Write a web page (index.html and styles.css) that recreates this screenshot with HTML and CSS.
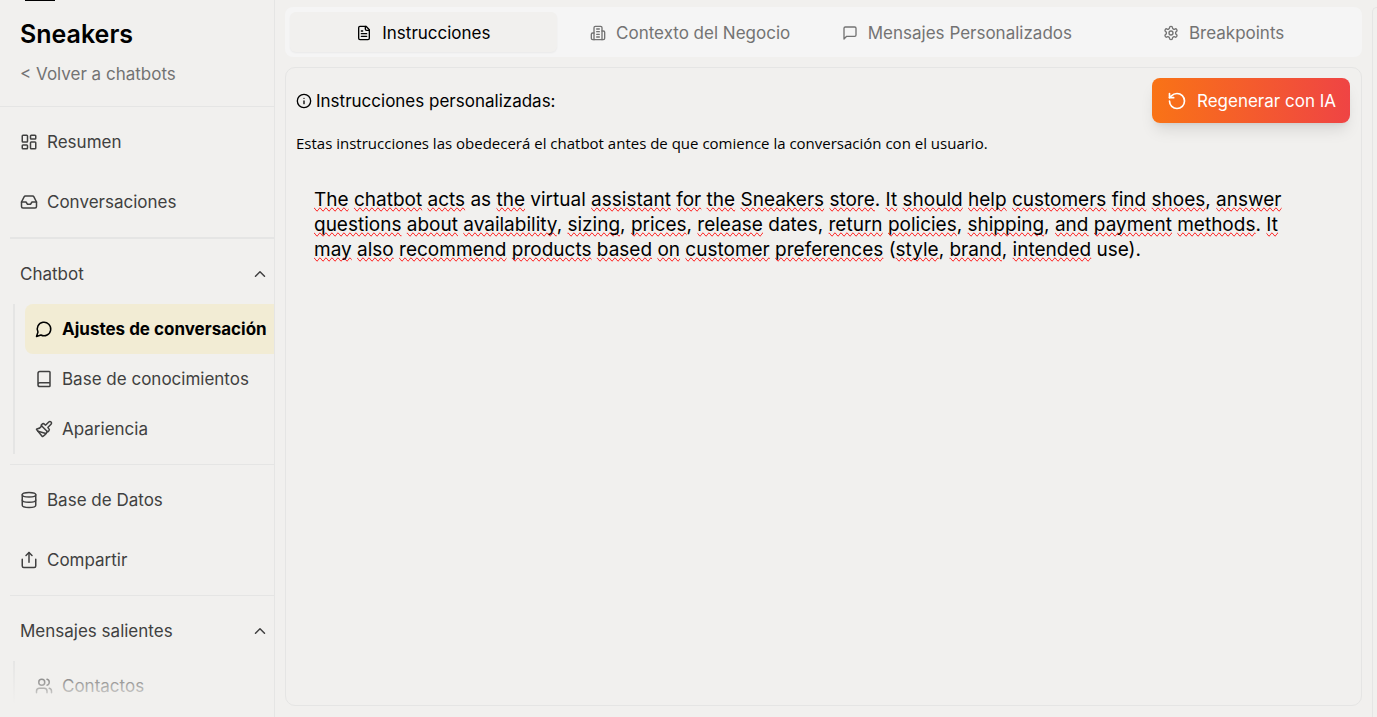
FILE: index.html
```html
<!DOCTYPE html>
<html lang="es">

<head>
    <meta charset="UTF-8" />
    <meta name="viewport" content="width=device-width, initial-scale=1.0" />
    <title>Sneakers - Ajustes de conversación</title>
    <link rel="stylesheet" href="styles.css">
</head>

<body>

    <aside class="sidebar">
        <header class="sidebar-header">
            <div class="logo"></div>
            <h1>Sneakers</h1>
            <a class="back" href="#">&lt; Volver a chatbots</a>
        </header>

        <nav>
            <div class="group group-main">
                <a class="item" href="#">
                    <svg class="icon" viewBox="0 0 24 24"><rect x="3" y="3" width="7" height="9" rx="1" /><rect x="14" y="3" width="7" height="5" rx="1" /><rect x="14" y="12" width="7" height="9" rx="1" /><rect x="3" y="16" width="7" height="5" rx="1" /></svg>
                    Resumen
                </a>
                <a class="item" href="#">
                    <svg class="icon" viewBox="0 0 24 24"><path d="M22 12h-6l-2 3h-4l-2-3H2" /><path d="M5.45 5.11 2 12v6a2 2 0 0 0 2 2h16a2 2 0 0 0 2-2v-6l-3.45-6.89A2 2 0 0 0 16.76 4H7.24a2 2 0 0 0-1.79 1.11z" /></svg>
                    Conversaciones
                </a>
            </div>

            <div class="group">
                <button class="group-title" type="button" aria-expanded="true">
                    Chatbot
                    <svg class="chevron" viewBox="0 0 24 24"><path d="m18 15-6-6-6 6" /></svg>
                </button>
                <div class="children">
                    <a class="item active" href="#">
                        <svg class="icon" viewBox="0 0 24 24"><path d="M7.9 20A9 9 0 1 0 4 16.1L2 22Z" /></svg>
                        Ajustes de conversación
                    </a>
                    <a class="item" href="#">
                        <svg class="icon" viewBox="0 0 24 24"><path d="M4 19.5v-15A2.5 2.5 0 0 1 6.5 2H19a1 1 0 0 1 1 1v18a1 1 0 0 1-1 1H6.5a1 1 0 0 1 0-5H20" /></svg>
                        Base de conocimientos
                    </a>
                    <a class="item" href="#">
                        <svg class="icon" viewBox="0 0 24 24"><path d="m14.622 17.897-10.68-2.913" /><path d="M18.376 2.622a1 1 0 1 1 3.002 3.002L17.36 9.643a.5.5 0 0 0 0 .707l.944.944a2.41 2.41 0 0 1 0 3.408l-.944.944a.5.5 0 0 1-.707 0L8.354 7.348a.5.5 0 0 1 0-.707l.944-.944a2.41 2.41 0 0 1 3.408 0l.944.944a.5.5 0 0 0 .707 0z" /><path d="M9 8c-1.804 2.71-3.97 3.46-6.583 3.948a.507.507 0 0 0-.302.819l7.32 8.883a1 1 0 0 0 1.185.204C12.735 20.405 16 16.792 16 15" /></svg>
                        Apariencia
                    </a>
                </div>
            </div>

            <div class="group">
                <a class="item" href="#">
                    <svg class="icon" viewBox="0 0 24 24"><ellipse cx="12" cy="5" rx="9" ry="3" /><path d="M3 5v14a9 3 0 0 0 18 0V5" /><path d="M3 12a9 3 0 0 0 18 0" /></svg>
                    Base de Datos
                </a>
                <a class="item" href="#">
                    <svg class="icon" viewBox="0 0 24 24"><path d="M12 2v13" /><path d="m16 6-4-4-4 4" /><path d="M3 11v9a2 2 0 0 0 2 2h14a2 2 0 0 0 2-2v-9" /></svg>
                    Compartir
                </a>
            </div>

            <div class="group">
                <button class="group-title" type="button" aria-expanded="true">
                    Mensajes salientes
                    <svg class="chevron" viewBox="0 0 24 24"><path d="m18 15-6-6-6 6" /></svg>
                </button>
                <div class="children">
                    <a class="item" href="#">
                        <svg class="icon" viewBox="0 0 24 24"><path d="M16 21v-2a4 4 0 0 0-4-4H6a4 4 0 0 0-4 4v2" /><circle cx="9" cy="7" r="4" /><path d="M22 21v-2a4 4 0 0 0-3-3.87" /><path d="M16 3.13a4 4 0 0 1 0 7.75" /></svg>
                        Contactos
                    </a>
                </div>
            </div>
        </nav>
    </aside>

    <main>
        <div class="tabs" role="tablist">
            <button class="tab selected" type="button" role="tab" aria-selected="true">
                <svg class="icon" viewBox="0 0 24 24"><path d="M15 2H6a2 2 0 0 0-2 2v16a2 2 0 0 0 2 2h12a2 2 0 0 0 2-2V7Z" /><path d="M14 2v4a2 2 0 0 0 2 2h4" /><path d="M10 9H8" /><path d="M16 13H8" /><path d="M16 17H8" /></svg>
                Instrucciones
            </button>
            <button class="tab" type="button" role="tab" aria-selected="false">
                <svg class="icon" viewBox="0 0 24 24"><path d="M6 22V4a2 2 0 0 1 2-2h8a2 2 0 0 1 2 2v18Z" /><path d="M6 12H4a2 2 0 0 0-2 2v6a2 2 0 0 0 2 2h2" /><path d="M18 9h2a2 2 0 0 1 2 2v9a2 2 0 0 1-2 2h-2" /><path d="M10 6h4" /><path d="M10 10h4" /><path d="M10 14h4" /><path d="M10 18h4" /></svg>
                Contexto del Negocio
            </button>
            <button class="tab" type="button" role="tab" aria-selected="false">
                <svg class="icon" viewBox="0 0 24 24"><path d="M21 15a2 2 0 0 1-2 2H7l-4 4V5a2 2 0 0 1 2-2h14a2 2 0 0 1 2 2z" /></svg>
                Mensajes Personalizados
            </button>
            <button class="tab" type="button" role="tab" aria-selected="false">
                <svg class="icon" viewBox="0 0 24 24"><path d="M12.22 2h-.44a2 2 0 0 0-2 2v.18a2 2 0 0 1-1 1.73l-.43.25a2 2 0 0 1-2 0l-.15-.08a2 2 0 0 0-2.73.73l-.22.38a2 2 0 0 0 .73 2.73l.15.1a2 2 0 0 1 1 1.72v.51a2 2 0 0 1-1 1.74l-.15.09a2 2 0 0 0-.73 2.73l.22.38a2 2 0 0 0 2.73.73l.15-.08a2 2 0 0 1 2 0l.43.25a2 2 0 0 1 1 1.73V20a2 2 0 0 0 2 2h.44a2 2 0 0 0 2-2v-.18a2 2 0 0 1 1-1.73l.43-.25a2 2 0 0 1 2 0l.15.08a2 2 0 0 0 2.73-.73l.22-.39a2 2 0 0 0-.73-2.73l-.15-.08a2 2 0 0 1-1-1.74v-.5a2 2 0 0 1 1-1.74l.15-.09a2 2 0 0 0 .73-2.73l-.22-.38a2 2 0 0 0-2.73-.73l-.15.08a2 2 0 0 1-2 0l-.43-.25a2 2 0 0 1-1-1.73V4a2 2 0 0 0-2-2z" /><circle cx="12" cy="12" r="3" /></svg>
                Breakpoints
            </button>
        </div>

        <section class="panel">
            <div class="panel-header">
                <label for="instructions">
                    <svg class="icon" viewBox="0 0 24 24"><circle cx="12" cy="12" r="10" /><path d="M12 16v-4" /><path d="M12 8h.01" /></svg>
                    Instrucciones personalizadas:
                </label>
                <button class="regenerate" type="button">
                    <svg class="icon" viewBox="0 0 24 24"><path d="M3 12a9 9 0 1 0 9-9 9.75 9.75 0 0 0-6.74 2.74L3 8" /><path d="M3 3v5h5" /></svg>
                    Regenerar con IA
                </button>
            </div>
            <p class="hint">Estas instrucciones las obedecerá el chatbot antes de que comience la conversación con el usuario.</p>
            <div class="editor">
                <div class="marks" id="marks" aria-hidden="true"></div>
                <textarea id="instructions" spellcheck="false">The chatbot acts as the virtual assistant for the Sneakers store. It should help customers find shoes, answer questions about availability, sizing, prices, release dates, return policies, shipping, and payment methods. It may also recommend products based on customer preferences (style, brand, intended use).</textarea>
            </div>
        </section>
    </main>

    <section class="preview"></section>

    <script>
        const input = document.getElementById('instructions');
        const marks = document.getElementById('marks');

        // words that are fine in the spanish dictionary
        const known = ['as', 'virtual', 'dates', 'use'];

        function check() {
            marks.textContent = '';
            input.value.split(/([A-Za-z]+)/).forEach(function (part, i) {
                if (i % 2 === 1 && !known.includes(part)) {
                    const mark = document.createElement('span');
                    mark.className = 'wrong';
                    mark.textContent = part;
                    marks.appendChild(mark);
                } else {
                    marks.append(part);
                }
            });
        }

        input.addEventListener('input', check);
        check();
    </script>

</body>

</html>
```
FILE: styles.css
```css
* {
    box-sizing: border-box;
}

body {
    margin: 0;
    height: 100vh;
    display: flex;
    overflow: hidden;
    background: #f1f0ee;
    color: #000;
    font-family: Inter, "Liberation Sans", sans-serif;
    font-size: 17px;
    line-height: 24px;
}

button,
textarea {
    font: inherit;
    color: inherit;
    border: none;
    background: none;
    margin: 0;
}

button {
    cursor: pointer;
}

a {
    color: inherit;
    text-decoration: none;
}

svg {
    flex: none;
    fill: none;
    stroke: currentColor;
    stroke-width: 2;
    stroke-linecap: round;
    stroke-linejoin: round;
}

/* sidebar */
.sidebar {
    position: relative;
    flex: 0 0 275px;
    overflow: hidden;
    border-right: 1px solid #e5e5e4;
    color: #404040;
}

/* fades out the end of the menu */
.sidebar::after {
    content: "";
    position: absolute;
    left: 0;
    right: 0;
    bottom: 0;
    height: 60px;
    background: linear-gradient(to bottom, rgba(241, 240, 238, 0), #f1f0ee 80%);
    pointer-events: none;
}

.sidebar-header {
    padding: 0 20px 20px;
    border-bottom: 1px solid #e5e5e4;
}

.logo {
    width: 30px;
    height: 1px;
    margin-left: 5px;
    background: #000;
}

.sidebar h1 {
    margin: 0;
    padding: 17px 0 11px;
    color: #000;
    font-size: 25px;
    font-weight: 600;
    line-height: 33px;
}

.back {
    display: block;
    color: #737373;
}

.group {
    margin-left: 10px;
    padding: 10px 0;
    border-bottom: 1px solid #e5e5e4;
}

.group-main {
    border-bottom-width: 2px;
}

.group:last-child {
    border-bottom: none;
}

.item {
    display: flex;
    align-items: center;
    gap: 9px;
    height: 50px;
    padding-left: 10px;
    white-space: nowrap;
}

.item .icon {
    width: 18px;
    height: 18px;
}

.item + .item {
    margin-top: 10px;
}

.group-title {
    display: flex;
    align-items: center;
    justify-content: space-between;
    width: 100%;
    height: 50px;
    padding: 0 5px 0 10px;
}

.chevron {
    width: 18px;
    height: 18px;
}

.children {
    margin: 5px 0 0 3px;
    padding-left: 10px;
    border-left: 2px solid #e5e5e4;
}

.children .item + .item {
    margin-top: 0;
}

.item.active {
    background: #f2ecd4;
    border-radius: 8px 0 0 8px;
    color: #000;
    font-weight: 700;
}

/* main column */
main {
    flex: 1;
    min-width: 0;
    display: flex;
    flex-direction: column;
    gap: 10px;
    padding: 7px 0 11px 10px;
}

.tabs {
    display: grid;
    grid-template-columns: repeat(4, 1fr);
    height: 50px;
    padding: 5px;
    background: #f5f5f5;
    border-radius: 8px;
}

.tab {
    display: flex;
    align-items: center;
    justify-content: center;
    gap: 10px;
    padding: 2px 0 0;
    border-radius: 6px;
    color: #737373;
    white-space: nowrap;
}

.tab.selected {
    background: #f1f0ee;
    color: #000;
    box-shadow: 0 1px 2px rgba(0, 0, 0, 0.05);
}

.tab .icon,
label .icon {
    width: 16px;
    height: 16px;
}

.panel {
    flex: 1;
    display: flex;
    flex-direction: column;
    gap: 10px;
    padding: 10px;
    border: 1px solid #e5e5e4;
    border-radius: 10px;
}

.panel-header {
    display: flex;
    align-items: center;
    justify-content: space-between;
}

label {
    display: flex;
    align-items: center;
    gap: 4px;
}

.regenerate {
    display: flex;
    align-items: center;
    gap: 10px;
    height: 45px;
    padding: 0 14px 0 15px;
    margin-right: 1px;
    border-radius: 8px;
    background: linear-gradient(to right, #f97316, #ef4444);
    box-shadow: 0 10px 15px -3px rgba(0, 0, 0, 0.1), 0 4px 6px -4px rgba(0, 0, 0, 0.1);
    color: #fff;
}

.regenerate .icon {
    width: 20px;
    height: 20px;
}

.hint {
    margin: 0;
    font-family: "Open Sans", sans-serif;
    font-size: 15px;
    line-height: 20px;
}

/* the spelling marks sit in the same cell, under the text */
.editor {
    flex: 1;
    display: grid;
    font-size: 19px;
    line-height: 25px;
}

.marks,
.editor textarea {
    grid-area: 1 / 1;
    padding: 24px 40px 24px 18px;
    white-space: pre-wrap;
    overflow-wrap: break-word;
}

.editor textarea {
    resize: none;
    outline: none;
}

.marks {
    color: transparent;
}

.wrong {
    text-decoration: spelling-error;
}

/* start of the chat preview */
.preview {
    flex: 0 0 5px;
    margin: 7px 0 0 10px;
    border: solid #e5e5e4;
    border-width: 1px 0 0 1px;
    border-radius: 10px 0 0 0;
}
```
